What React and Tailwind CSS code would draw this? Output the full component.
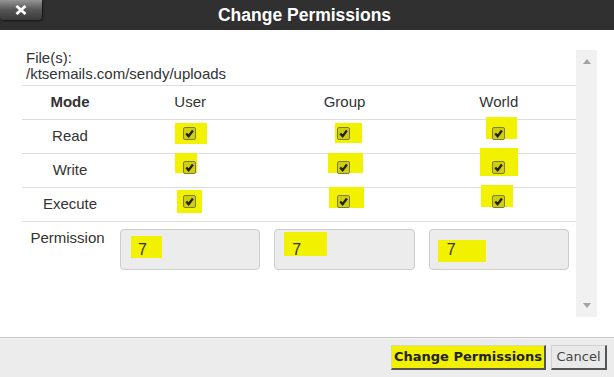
import React from 'react'

const cols = ['User', 'Group', 'World']

// highlight marks drawn behind each checkbox, offsets from the 13px box
const rows = [
  {
    label: 'Read',
    marks: [
      'left-[-8px] top-[-4px] w-[32px] h-[21px]',
      'left-[-2px] top-[-4px] w-[27px] h-[20px]',
      'left-[-6px] top-[-10px] w-[31px] h-[22px]',
    ],
  },
  {
    label: 'Write',
    marks: [
      'left-[-8px] top-[-8px] w-[22px] h-[20px]',
      'left-[-9px] top-[-8px] w-[35px] h-[20px]',
      'left-[-12px] top-[-13px] w-[38px] h-[28px]',
    ],
  },
  {
    label: 'Execute',
    marks: [
      'left-[-6px] top-[-5px] w-[25px] h-[23px]',
      'left-[-8px] top-[-8px] w-[35px] h-[21px]',
      'left-[-11px] top-[-10px] w-[32px] h-[22px]',
    ],
  },
]

const permMarks = [
  'left-[10px] top-[6px] w-[31px] h-[22px]',
  'left-[9px] top-[2px] w-[43px] h-[24px]',
  'left-[8px] top-[10px] w-[48px] h-[22px]',
]

function Check({ mark }) {
  return (
    <span className="relative inline-block w-[13px] h-[13px] mb-[6px]">
      <span className={`absolute bg-[#f2f200] ${mark}`} />
      <span className="relative flex w-[13px] h-[13px] items-center justify-center rounded-[2px] border border-[#7d7d3a] bg-[#cfcf10]">
        <svg width="9" height="9" viewBox="0 0 9 9">
          <path d="M1.2 4.5 L3.6 7.1 L7.9 1.5" fill="none" stroke="#20200a" strokeWidth="2.3" />
        </svg>
      </span>
    </span>
  )
}

export default function App() {
  return (
    <div className="w-[614px] h-[377px] flex flex-col bg-white text-[#333] font-['Liberation_Sans',Arial,sans-serif]">
      {/* Title bar */}
      <div className="relative h-[30px] shrink-0 bg-[#303030] flex items-center justify-center pr-[5px]">
        <button className="absolute left-0 top-0 w-[42px] h-[20px] flex items-center justify-center rounded-b-[4px] bg-gradient-to-b from-[#959595] via-[#555] to-[#3a3a3a] shadow-[1px_1px_2px_rgba(0,0,0,0.6)]">
          <svg width="12" height="10" viewBox="0 0 12 10">
            <path d="M1.5 1 L10.5 9 M10.5 1 L1.5 9" stroke="#fff" strokeWidth="2.8" />
          </svg>
        </button>
        <h1 className="text-white font-bold text-[17.5px] leading-none pt-[1px]">Change Permissions</h1>
      </div>

      {/* Body */}
      <div className="flex-1 flex pt-[20px] pb-[20px] pl-[22px] pr-[17px]">
        <div className="flex-1 text-[15px]">
          <div className="pl-[4px] leading-[16px]">
            File(s):
            <br />
            /ktsemails.com/sendy/uploads
          </div>

          <div className="mt-[3px]">
            <div className="grid grid-cols-[91px_1fr_1fr_1fr] items-center h-[34px] border-t border-[#ddd]">
              <div className="text-center pl-[5px] font-bold">Mode</div>
              {cols.map((c) => (
                <div key={c} className="text-center">{c}</div>
              ))}
            </div>

            {rows.map((r) => (
              <div key={r.label} className="grid grid-cols-[91px_1fr_1fr_1fr] items-center h-[34px] border-t border-[#ddd]">
                <div className="text-center pl-[5px] pb-[1px]">{r.label}</div>
                {r.marks.map((m, i) => (
                  <div key={i} className="flex justify-center pr-[1px]">
                    <Check mark={m} />
                  </div>
                ))}
              </div>
            ))}

            <div className="grid grid-cols-[91px_1fr] items-start border-t border-[#ddd] pt-[7px]">
              <div className="text-center pt-[1px] leading-[16px]">Permission</div>
              <div className="flex gap-[14px] px-[7px]">
                {permMarks.map((m, i) => (
                  <div key={i} className="relative flex-1 h-[41px] flex items-center pl-[17px] rounded-[4px] border border-[#ccc] bg-[#ececec] text-[16px]">
                    <span className={`absolute bg-[#f2f200] ${m}`} />
                    <span className="relative">7</span>
                  </div>
                ))}
              </div>
            </div>
          </div>
        </div>

        {/* Scrollbar */}
        <div className="w-[21px] bg-[#f1f1f1] flex flex-col items-center justify-between pt-[9px] pb-[9px]">
          <svg width="8" height="5" viewBox="0 0 8 5">
            <path d="M0 5 L4 0 L8 5 Z" fill="#a3a3a3" />
          </svg>
          <svg width="8" height="5" viewBox="0 0 8 5">
            <path d="M0 0 L8 0 L4 5 Z" fill="#a3a3a3" />
          </svg>
        </div>
      </div>

      {/* Footer */}
      <div className="h-[40px] shrink-0 border-t border-[#c4c4c4] bg-[#ececec] shadow-[inset_0_1px_0_#f6f6f6] flex justify-end items-start gap-[5px] pt-[7px] pr-[7px] font-['DejaVu_Sans',Verdana,sans-serif] text-[13px]">
        <button className="w-[155px] h-[25px] flex items-center justify-center bg-[#f0f000] text-[#222] font-bold border-t border-l border-t-[#d8d8b0] border-l-[#d8d8b0] border-r-2 border-b-2 border-r-[#555] border-b-[#555]">
          Change Permissions
        </button>
        <button className="w-[56px] h-[25px] flex items-center justify-center bg-[#e9e9e9] text-[#444] border-t border-l border-t-[#d0d0d0] border-l-[#d0d0d0] border-r-2 border-b-2 border-r-[#555] border-b-[#555]">
          Cancel
        </button>
      </div>
    </div>
  )
}
